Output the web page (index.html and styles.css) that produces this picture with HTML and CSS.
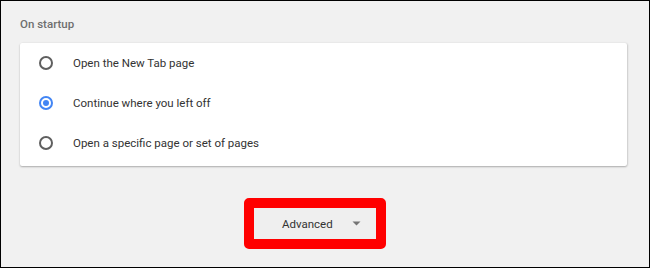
FILE: index.html
```html
<!DOCTYPE html>
<html>
<head>
<meta charset="utf-8">
<link rel="stylesheet" href="styles.css">
</head>
<body>
<div class="frame">
  <div class="title">On startup</div>
  <div class="card">
    <div class="row"><span class="radio"></span><span class="label">Open the New Tab page</span></div>
    <div class="row"><span class="radio checked"></span><span class="label">Continue where you left off</span></div>
    <div class="row"><span class="radio"></span><span class="label">Open a specific page or set of pages</span></div>
  </div>
  <div class="btnwrap">
    <div class="advanced">
      <span class="advtext">Advanced</span>
      <svg class="caret" width="9" height="5" viewBox="0 0 9 5"><path d="M0.5 0.5 L8.5 0.5 L4.5 4.5 Z" fill="#757575"/></svg>
    </div>
  </div>
</div>
</body>
</html>
```
FILE: styles.css
```css
html, body {
  margin: 0;
  padding: 0;
}
body {
  font-family: Roboto, "Liberation Sans", sans-serif;
}
.frame {
  box-sizing: border-box;
  width: 650px;
  height: 268px;
  border: 1px solid #000;
  background: #f1f1f1;
  padding: 15px 0 0 19px;
  overflow: hidden;
}
.title {
  font-size: 11.5px;
  line-height: 16px;
  font-weight: 500;
  color: #6e6e6e;
}
.card {
  margin-top: 11px;
  width: 607px;
  height: 123px;
  box-sizing: border-box;
  background: #fff;
  box-shadow: 0 1px 2px rgba(0,0,0,0.28), 1px 0 2px rgba(0,0,0,0.08);
  border-radius: 2px;
  padding-top: 0;
}
.row {
  height: 40px;
  display: flex;
  align-items: center;
  padding-left: 19px;
}
.radio {
  box-sizing: border-box;
  width: 14px;
  height: 14px;
  border: 2px solid #5f5f5f;
  border-radius: 50%;
  flex: none;
  display: flex;
  align-items: center;
  justify-content: center;
}
.radio.checked {
  border-color: #4285f4;
}
.radio.checked::after {
  content: "";
  width: 6px;
  height: 6px;
  border-radius: 50%;
  background: #4285f4;
}
.label {
  margin-left: 20px;
  font-size: 11.5px;
  color: #333;
}
.btnwrap {
  margin-top: 32px;
  padding-left: 224px;
}
.advanced {
  box-sizing: border-box;
  width: 142px;
  height: 51px;
  border: 10px solid #ff0000;
  border-radius: 5px;
  background: #efefef;
  display: flex;
  align-items: center;
  padding-left: 28px;
}
.advtext {
  font-size: 11.5px;
  color: #333;
}
.caret {
  margin-left: 19px;
}
```
